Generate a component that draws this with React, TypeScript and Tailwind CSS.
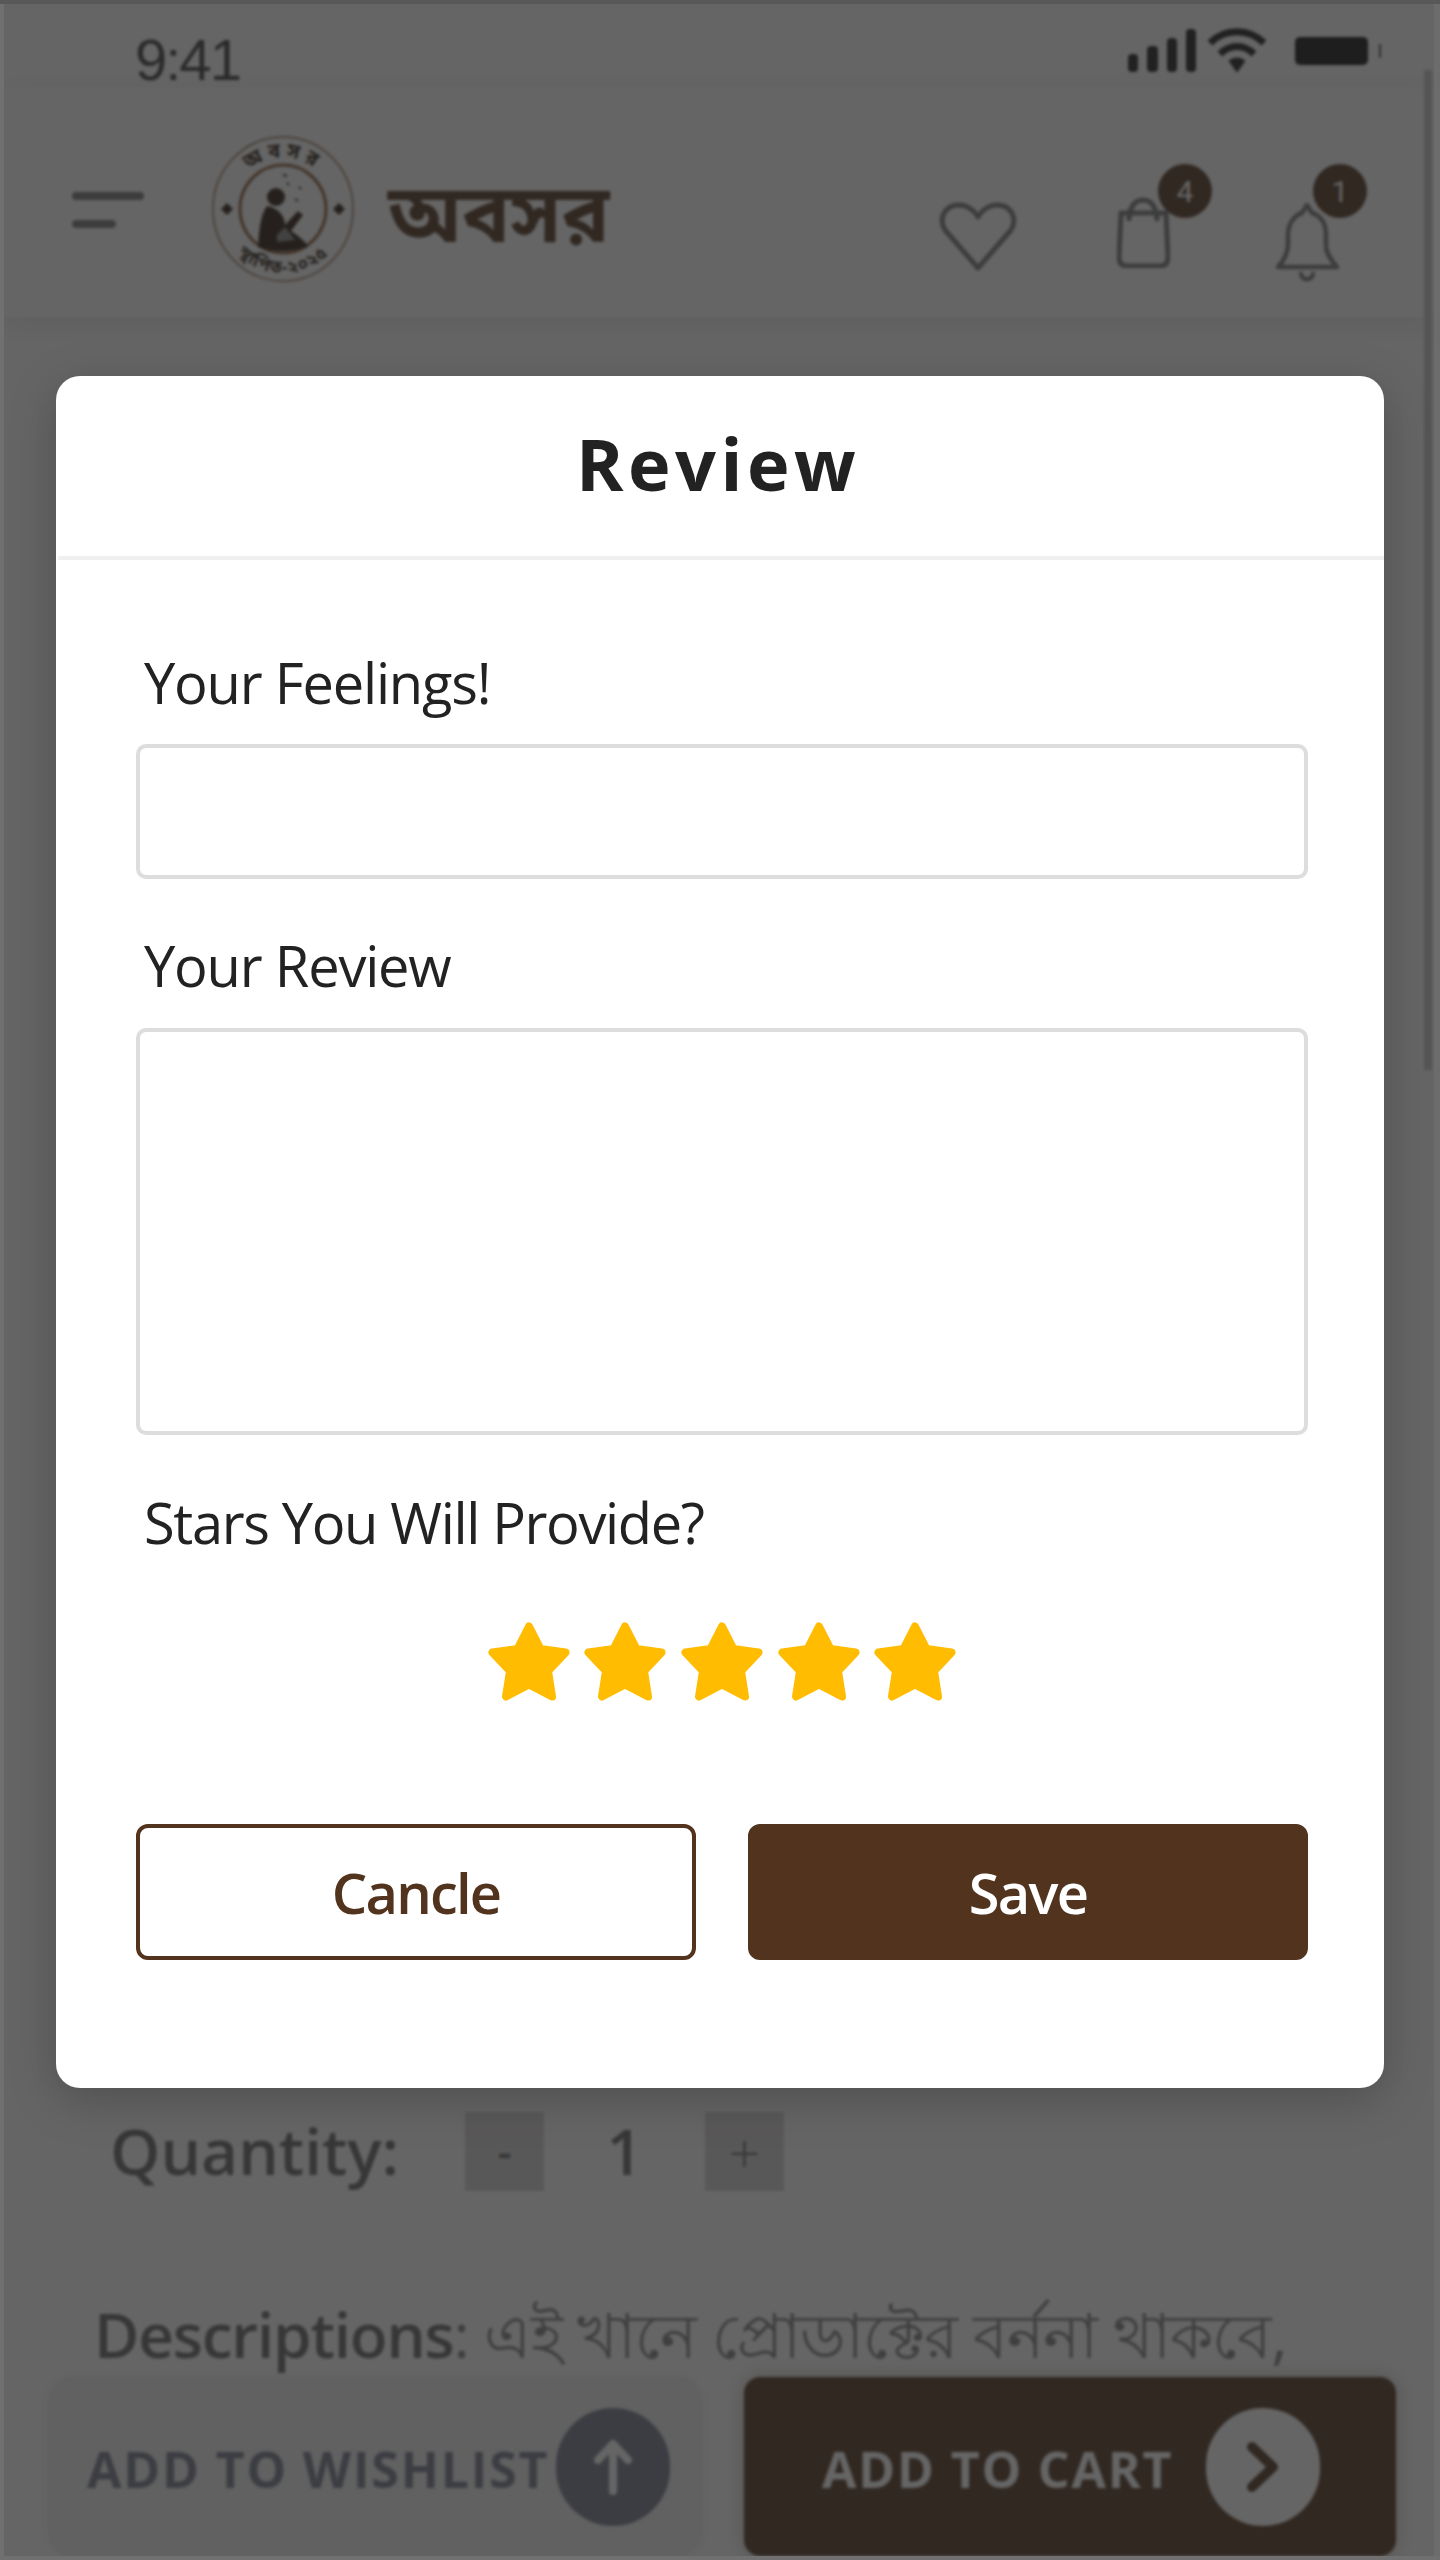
import React from 'react';

const StatusIcons: React.FC = () => (
  <div className="flex items-center">
    <svg width="68" height="43" viewBox="0 0 68 43" fill="#1c1c1c" aria-hidden="true">
      <rect x="0" y="25" width="10" height="18" rx="4" />
      <rect x="19" y="17" width="11" height="26" rx="4" />
      <rect x="39" y="9" width="10" height="34" rx="4" />
      <rect x="58" y="0" width="10" height="43" rx="4" />
    </svg>
    <svg className="ml-[11px]" width="60" height="45" viewBox="0 0 60 45" fill="none" stroke="#1c1c1c" strokeWidth="7" aria-hidden="true">
      <path d="M3 15 C18 0 42 0 57 15" />
      <path d="M13 26 C23 16 37 16 47 26" />
      <path d="M22 33 L30 44 L38 33 C34 29 26 29 22 33 Z" fill="#1c1c1c" strokeWidth="1" />
    </svg>
    <div className="ml-[28px] w-[73px] h-[28px] rounded-[5px] bg-[#111]" />
    <div className="ml-[11px] w-[2px] h-[14px] rounded-full bg-[#444]" />
  </div>
);

const Logo: React.FC = () => (
  <svg width="144" height="148" viewBox="0 0 144 148" fill="none" aria-hidden="true">
    <defs>
      <path id="logo-top" d="M20 74 A52 52 0 0 1 124 74" />
      <path id="logo-bottom" d="M8 74 A64 64 0 0 0 136 74" />
    </defs>
    <ellipse cx="72" cy="74" rx="70" ry="72" stroke="#8c6a4f" strokeWidth="1.5" />
    <ellipse cx="72" cy="74" rx="43" ry="44" stroke="#8a5a36" strokeWidth="3" />
    <text fontSize="20" fontWeight="700" fill="#2b1a0f" letterSpacing="5" textAnchor="middle" fontFamily="'Noto Sans Bengali','Noto Sans',sans-serif">
      <textPath href="#logo-top" startOffset="50%">অবসর</textPath>
    </text>
    <text fontSize="17" fontWeight="700" fill="#2b1a0f" letterSpacing="1" textAnchor="middle" fontFamily="'Noto Sans Bengali','Noto Sans',sans-serif">
      <textPath href="#logo-bottom" startOffset="50%">স্থাপিত-২০২৫</textPath>
    </text>
    <path d="M10 74 L16 68 L22 74 L16 80 Z M122 74 L128 68 L134 74 L128 80 Z" fill="#2b1a0f" />
    <circle cx="65" cy="62" r="9" fill="#2b1a0f" />
    <path d="M56 71 C49 80 48 98 47 112 C60 118 86 117 97 111 C92 104 86 100 80 96 L92 80 L87 76 L74 90 C74 82 68 73 56 71 Z" fill="#2b1a0f" />
    <path d="M66 100 L74 92 L84 105 L66 107 Z" fill="#8a8a8a" />
    <path d="M76 48 L78 50 M88 52 L90 54 M84 64 L87 66 M72 40 L76 41" stroke="#3a2a1e" strokeWidth="2" />
  </svg>
);

const HeartIcon: React.FC = () => (
  <svg width="78" height="70" viewBox="0 0 78 70" fill="none" stroke="#777" strokeWidth="5" strokeLinejoin="round" aria-hidden="true">
    <path d="M39 66 L6 28 C-1 16 6 3 20 3 C28 3 35 8 39 15 C43 8 50 3 58 3 C72 3 79 16 72 28 Z" />
  </svg>
);

const BagIcon: React.FC = () => (
  <svg width="53" height="71" viewBox="0 0 53 71" fill="none" stroke="#777" strokeWidth="5" strokeLinejoin="round" aria-hidden="true">
    <path d="M4 16 H49 L51 60 C51 66 48 69 43 69 H10 C5 69 2 66 2 60 Z" />
    <path d="M12 24 C12 10 18 3 26 3 C34 3 40 10 40 24" />
  </svg>
);

const BellIcon: React.FC = () => (
  <svg width="63" height="79" viewBox="0 0 63 79" fill="none" stroke="#777" strokeWidth="4.5" strokeLinejoin="round" aria-hidden="true">
    <path d="M31 2 L36 10 C46 13 50 22 50 32 V42 C50 50 54 56 61 64 H2 C9 56 12 50 12 42 V32 C12 22 17 13 26 10 Z" />
    <path d="M25 71 C26 78 36 78 37 71" strokeLinecap="round" />
  </svg>
);

const Badge: React.FC<{ value: string; className: string }> = ({ value, className }) => (
  <span className={`absolute flex items-center justify-center w-[54px] h-[54px] rounded-full bg-[#51331e] text-[30px] text-white font-['Roboto',sans-serif] ${className}`}>
    {value}
  </span>
);

const Star: React.FC = () => (
  <svg width="82" height="79" viewBox="0 0 82 79" fill="#ffbc00" stroke="#ffbc00" strokeWidth="8" strokeLinejoin="round" aria-hidden="true">
    <path d="M41 4.5 L52.5 27 L77.5 30.5 L60 49 L64 74.5 L41 62.5 L18 74.5 L22 49 L4.5 30.5 L29.5 27 Z" />
  </svg>
);

const ProductPage: React.FC = () => (
  <div className="flex flex-col h-full bg-white">
    <div className="flex items-start justify-between h-[88px] pl-[135px] pr-[59px] pt-[28px]">
      <span className="text-[58px] leading-[64px] text-[#3c3c3c] font-['Liberation_Sans',sans-serif] tracking-[-2px]">9:41</span>
      <StatusIcons />
    </div>

    <header className="flex items-start h-[229px] pl-[72px] pr-[101px] shadow-[0_6px_30px_rgba(0,0,0,0.1)]">
      <div className="flex flex-col gap-[20px] w-[72px] mt-[104px]">
        <span className="block w-[72px] h-[8px] rounded-full bg-[#777]" />
        <span className="block w-[44px] h-[8px] rounded-full bg-[#777]" />
      </div>
      <div className="ml-[67px] mt-[47px]">
        <Logo />
      </div>
      <span className="ml-[33px] mt-[94px] text-[80px] leading-none font-bold text-[#51331e] font-['Noto_Sans_Bengali','Noto_Sans','Open_Sans',sans-serif]">অবসর</span>
      <div className="flex items-start ml-auto">
        <div className="mt-[114px]">
          <HeartIcon />
        </div>
        <div className="relative ml-[100px] mt-[109px]">
          <BagIcon />
          <Badge value="4" className="left-[41px] -top-[33px]" />
        </div>
        <div className="relative ml-[106px] mt-[115px]">
          <BellIcon />
          <Badge value="1" className="left-[37px] -top-[39px]" />
        </div>
      </div>
    </header>

    <main className="flex flex-col flex-1 justify-end font-['Open_Sans',sans-serif]">
      <div className="flex items-center pl-[110px] text-[#666]">
        <span className="w-[355px] text-[64px] leading-[80px] font-semibold">Quantity:</span>
        <span className="flex items-center justify-center w-[79px] h-[79px] bg-[#d8d4d4] text-[44px] font-semibold">-</span>
        <span className="w-[161px] text-center text-[64px] leading-[80px] font-semibold">1</span>
        <span className="flex items-center justify-center w-[79px] h-[79px] bg-[#d8d4d4] text-[56px] font-light">+</span>
      </div>

      <p className="mt-[105px] pl-[94px] text-[62px] leading-[76px] text-[#808080] whitespace-nowrap">
        <span className="font-semibold tracking-[-1.2px] text-[#666]">Descriptions</span>
        <span className="tracking-[-0.8px]">: এই খানে প্রোডাক্টের বর্ননা থাকবে,</span>
      </p>

      <div className="flex mt-[5px] pl-[48px] pr-[44px] gap-[42px] h-[179px] mb-[4px]">
        <div className="flex items-center w-[654px] pl-[39px] pr-[32px] rounded-[24px] bg-[#f0f0f0] shadow-[0_0_20px_rgba(0,0,0,0.05)]">
          <span className="pt-[6px] text-[50px] font-bold text-[#757b8c] tracking-[1.8px] whitespace-nowrap">ADD TO WISHLIST</span>
          <span className="flex items-center justify-center ml-auto w-[114px] h-[118px] rounded-full bg-[#757b8c]">
            <svg width="40" height="56" viewBox="0 0 40 56" fill="none" stroke="#fff" strokeWidth="8" strokeLinecap="round" strokeLinejoin="round" aria-hidden="true">
              <path d="M20 52 V5 M5 21 L20 5 L35 21" />
            </svg>
          </span>
        </div>
        <div className="flex items-center flex-1 pl-[78px] pr-[76px] rounded-[16px] bg-[#51331e] shadow-[0_0_20px_rgba(81,51,30,0.3)]">
          <span className="pt-[6px] text-[50px] font-bold text-white tracking-[1.8px] whitespace-nowrap">ADD TO CART</span>
          <span className="flex items-center justify-center ml-auto w-[114px] h-[118px] rounded-full bg-white">
            <svg width="34" height="52" viewBox="0 0 34 52" fill="none" stroke="#51331e" strokeWidth="10" strokeLinecap="round" strokeLinejoin="round" aria-hidden="true">
              <path d="M6 6 L27 26 L6 46" />
            </svg>
          </span>
        </div>
      </div>
    </main>
  </div>
);

const ReviewModal: React.FC = () => (
  <div className="w-[1328px] h-[1712px] rounded-[24px] bg-white shadow-[0_12px_48px_rgba(0,0,0,0.22)] font-['Open_Sans',sans-serif] text-[#222]">
    <div className="flex items-center justify-center h-[184px] ml-[2px] pr-[6px] pb-[6px] border-b-4 border-[#f0f0f0]">
      <h2 className="text-[72px] leading-none font-bold tracking-[4.5px]">Review</h2>
    </div>

    <div className="pl-[80px] pr-[76px] pt-[84px]">
      <label className="block pl-[8px] text-[56px] leading-[76px] tracking-[-1.2px]">Your Feelings!</label>
      <div className="mt-[24px] h-[135px] rounded-[10px] border-4 border-[#ddd]" />

      <label className="block mt-[48px] pl-[8px] text-[56px] leading-[76px] tracking-[-1.2px]">Your Review</label>
      <div className="mt-[25px] h-[407px] rounded-[10px] border-4 border-[#ddd]" />

      <label className="block mt-[49px] pl-[8px] text-[56px] leading-[76px] tracking-[-1.35px]">Stars You Will Provide?</label>

      <div className="flex justify-center gap-[14.6px] mt-[62px]">
        <Star />
        <Star />
        <Star />
        <Star />
        <Star />
      </div>

      <div className="flex gap-[52px] mt-[123px]">
        <button className="flex-1 h-[136px] rounded-[12px] border-4 border-[#51331e] text-[56px] font-semibold text-[#51331e] tracking-[-1.8px]">Cancle</button>
        <button className="flex-1 h-[136px] rounded-[12px] border-4 border-[#51331e] bg-[#51331e] text-[56px] font-semibold text-white tracking-[-1.8px]">Save</button>
      </div>
    </div>
  </div>
);

const App: React.FC = () => (
  <div className="relative w-[1440px] h-[2560px] overflow-hidden">
    <ProductPage />
    {/* scrollbar */}
    <div className="absolute right-[8px] top-[70px] w-[8px] h-[1000px] bg-[#c8c8c8]" />
    <div className="absolute inset-0 flex justify-center pt-[376px] bg-[#242424]/70 backdrop-blur-[1.5px]">
      <ReviewModal />
    </div>
    {/* screenshot edge strips */}
    <div className="absolute left-0 top-0 bottom-0 w-[4px] bg-[#707070]" />
    <div className="absolute right-0 top-0 bottom-0 w-[6px] bg-[#6c6c6c]" />
    <div className="absolute left-0 right-0 bottom-0 h-[4px] bg-[#707070]" />
    <div className="absolute left-0 right-0 top-0 h-[4px] bg-[#585858]" />
  </div>
);

export default App;
